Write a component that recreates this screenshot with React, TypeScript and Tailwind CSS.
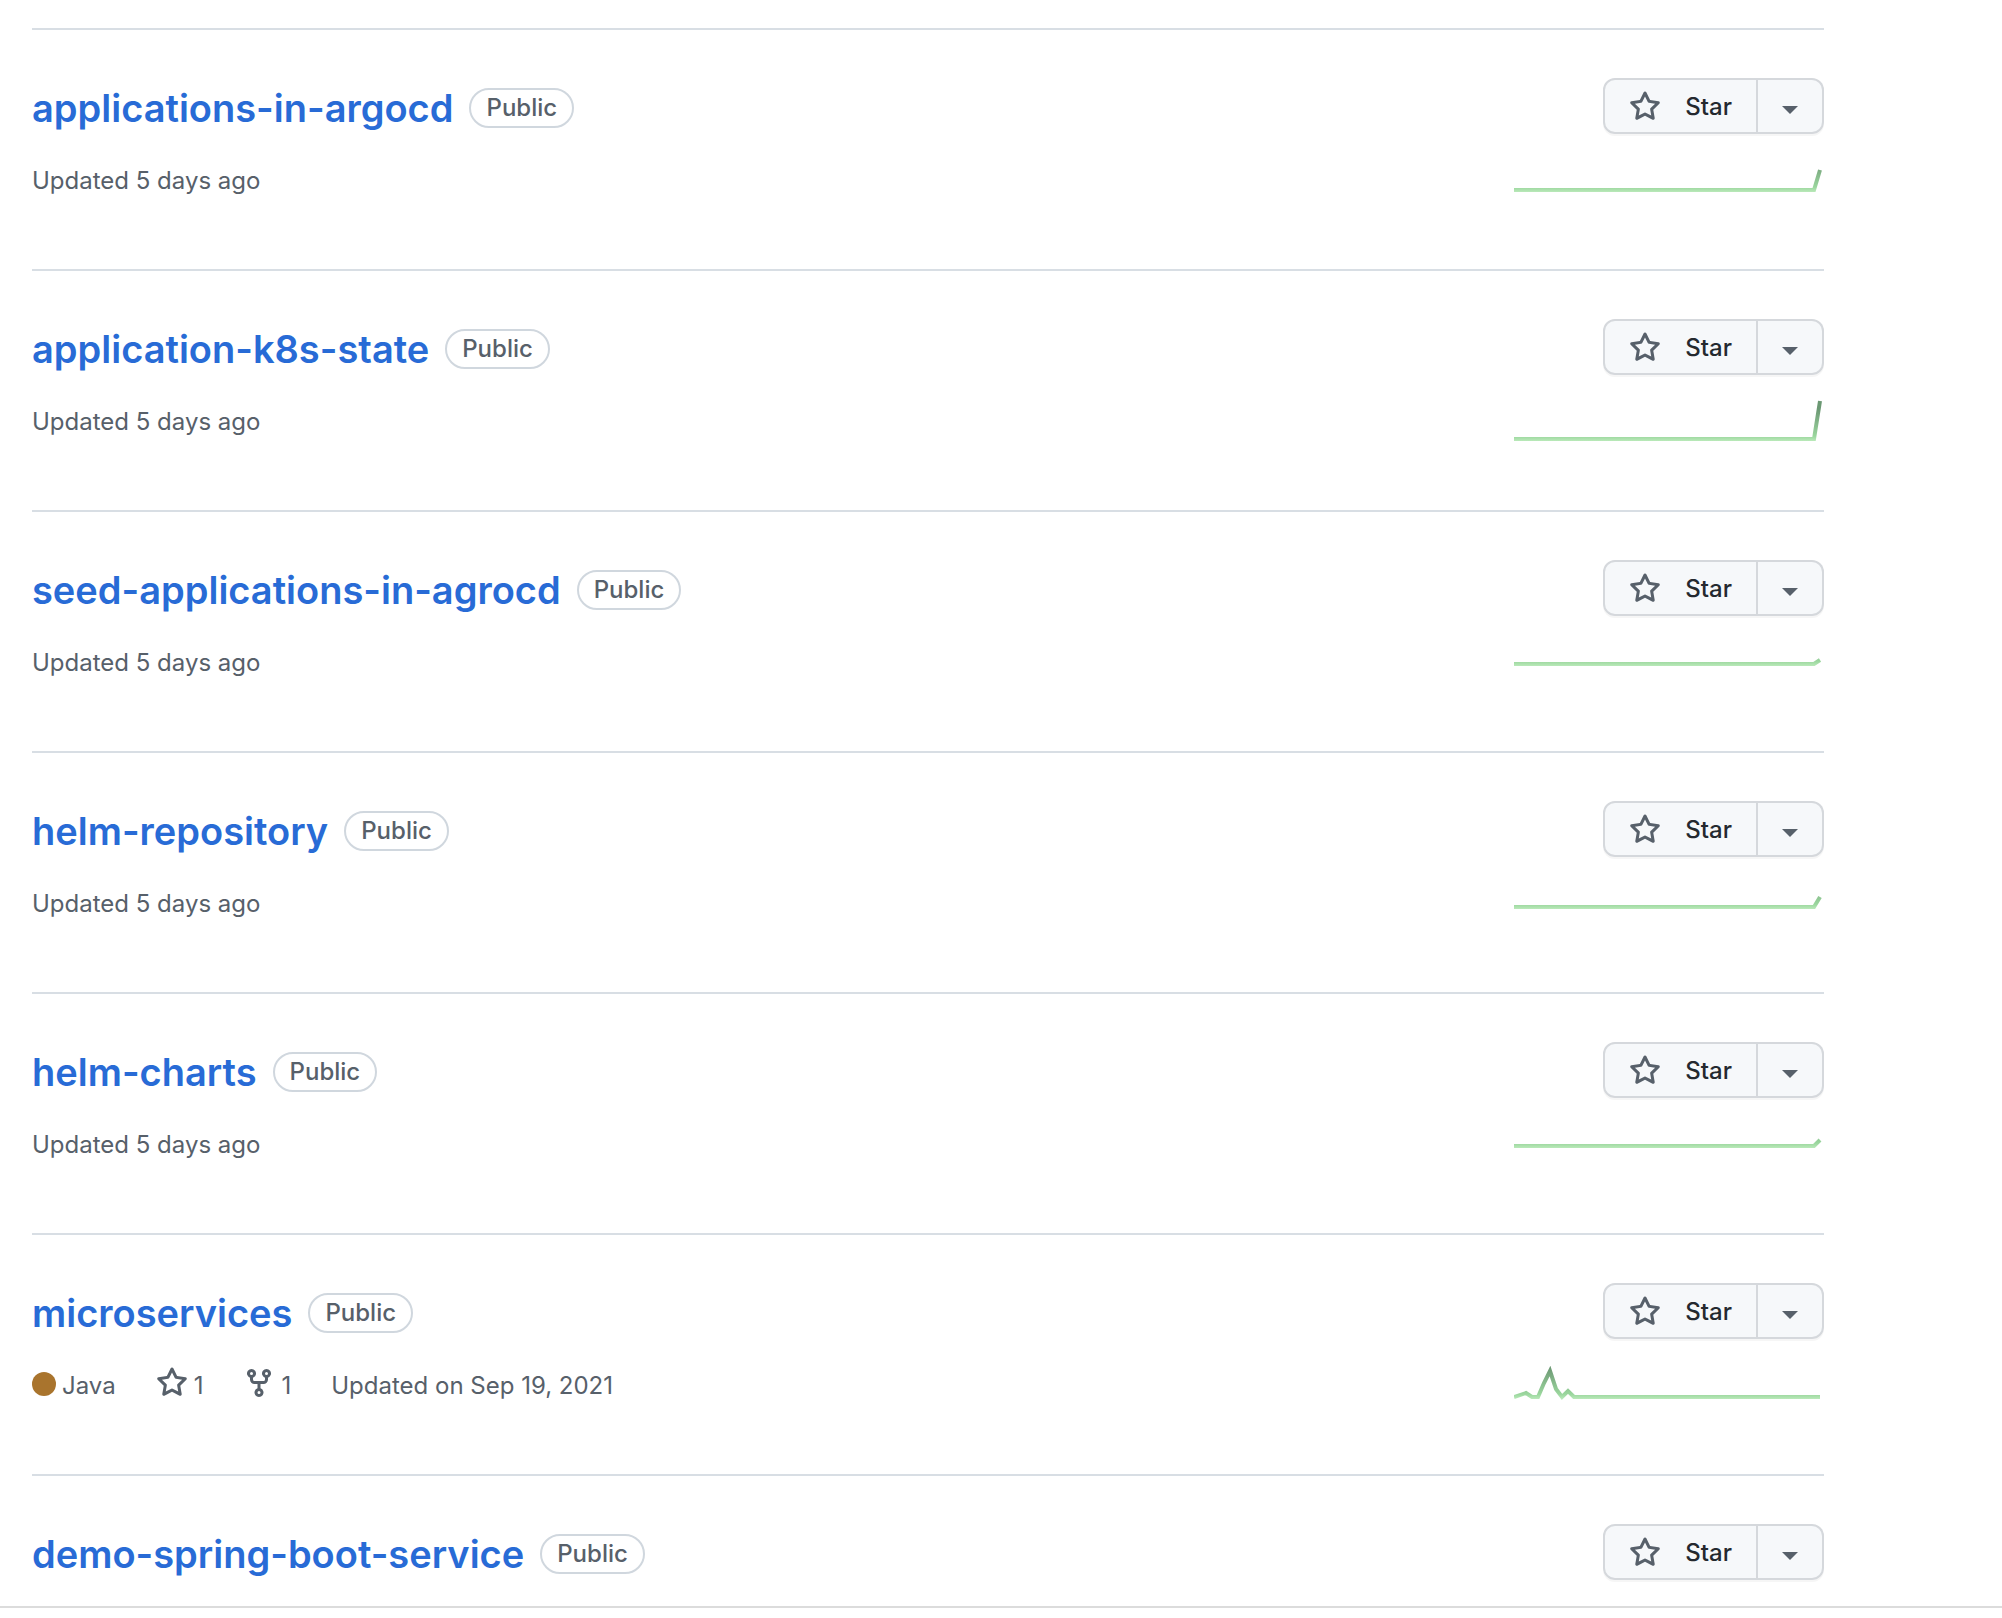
import React from "react";

type Repo = {
  name: string;
  updated: string;
  base: number;
  points: string;
  language?: string;
  stars?: number;
  forks?: number;
};

const repos: Repo[] = [
  { name: "applications-in-argocd", updated: "Updated 5 days ago", base: 34, points: "0,34 300,34 306,14" },
  { name: "application-k8s-state", updated: "Updated 5 days ago", base: 42, points: "0,42 300,42 306,4" },
  { name: "seed-applications-in-agrocd", updated: "Updated 5 days ago", base: 26, points: "0,26 300,26 306,22" },
  { name: "helm-repository", updated: "Updated 5 days ago", base: 28, points: "0,28 300,28 306,18" },
  { name: "helm-charts", updated: "Updated 5 days ago", base: 26, points: "0,26 300,26 306,20" },
  {
    name: "microservices",
    updated: "Updated on Sep 19, 2021",
    base: 36,
    points: "0,36 12,32 18,36 24,36 30,22 36,10 42,28 48,36 54,30 60,36 306,36",
    language: "Java",
    stars: 1,
    forks: 1,
  },
  { name: "demo-spring-boot-service", updated: "", base: 0, points: "" },
];

function StarIcon() {
  return (
    <svg viewBox="0 0 16 16" className="size-8 shrink-0 fill-[#57606a]" aria-hidden="true">
      <path
        fillRule="evenodd"
        d="M8 .25a.75.75 0 01.673.418l1.882 3.815 4.21.612a.75.75 0 01.416 1.279l-3.046 2.97.719 4.192a.75.75 0 01-1.088.791L8 12.347l-3.766 1.98a.75.75 0 01-1.088-.79l.72-4.194L.818 6.374a.75.75 0 01.416-1.28l4.21-.611L7.327.668A.75.75 0 018 .25zm0 2.445L6.615 5.5a.75.75 0 01-.564.41l-3.097.45 2.24 2.184a.75.75 0 01.216.664l-.528 3.084 2.769-1.456a.75.75 0 01.698 0l2.77 1.456-.53-3.084a.75.75 0 01.216-.664l2.24-2.183-3.096-.45a.75.75 0 01-.564-.41L8 2.694v.001z"
      />
    </svg>
  );
}

function ForkIcon() {
  return (
    <svg viewBox="0 0 16 16" className="size-8 shrink-0 fill-[#57606a]" aria-hidden="true">
      <path
        fillRule="evenodd"
        d="M5 3.25a.75.75 0 11-1.5 0 .75.75 0 011.5 0zm0 2.122a2.25 2.25 0 10-1.5 0v.878A2.25 2.25 0 005.75 8.5h1.5v2.128a2.251 2.251 0 101.5 0V8.5h1.5a2.25 2.25 0 002.25-2.25v-.878a2.25 2.25 0 10-1.5 0v.878a.75.75 0 01-.75.75h-4.5A.75.75 0 015 6.25v-.878zm3.75 7.378a.75.75 0 11-1.5 0 .75.75 0 011.5 0zm3-8.75a.75.75 0 100-1.5.75.75 0 000 1.5z"
      />
    </svg>
  );
}

function Sparkline({ id, base, points }: { id: string; base: number; points: string }) {
  return (
    <svg viewBox="0 0 310 60" className="h-[60px] w-[310px]" role="img" aria-label="Past year of activity">
      <defs>
        <linearGradient id={id} gradientUnits="userSpaceOnUse" x1="0" x2="0" y1={base + 3} y2={base - 30}>
          <stop offset="0%" stopColor="#c0edbf" />
          <stop offset="18%" stopColor="#9ad69d" />
          <stop offset="60%" stopColor="#83b588" />
          <stop offset="100%" stopColor="#6b9873" />
        </linearGradient>
      </defs>
      <polyline points={points} fill="none" stroke={`url(#${id})`} strokeWidth="4" />
    </svg>
  );
}

function StarButton({ name }: { name: string }) {
  return (
    <div className="flex h-14 rounded-xl shadow-[0_2px_0_rgba(27,31,36,0.04)]">
      <button
        type="button"
        aria-label={`Star ${name}`}
        className="flex items-center gap-6 rounded-l-xl border-2 border-[#d5d8dc] bg-[#f6f8fa] px-6 pt-0.5 text-2xl font-medium text-[#24292f]"
      >
        <StarIcon />
        Star
      </button>
      <button
        type="button"
        aria-label={`Add ${name} to a list`}
        className="flex w-[66px] items-center justify-center rounded-r-xl border-2 border-l-0 border-[#d5d8dc] bg-[#f6f8fa]"
      >
        <svg viewBox="0 0 16 16" className="size-4 fill-[#57606a]" aria-hidden="true">
          <path d="M0 8h16l-8 8z" />
        </svg>
      </button>
    </div>
  );
}

function RepoRow({ repo }: { repo: Repo }) {
  return (
    <li className="flex justify-between border-t-2 border-[#d8dee4] pt-12 pb-[53px] last:pb-[22px]">
      <div>
        <div className="flex items-center gap-4">
          <h3 className="text-[38px] leading-[60px] font-semibold">
            <a href={`#${repo.name}`} className="text-[#286bd6]">
              {repo.name}
            </a>
          </h3>
          <span className="flex h-10 items-center rounded-full border-2 border-[#d0d7de] px-[15px] text-2xl font-medium text-[#57606a]">
            Public
          </span>
        </div>
        {repo.updated && (
          <div className="mt-6 flex items-start text-2xl leading-[38px] text-[#57606a]">
            {repo.language && (
              <span className="mr-10 flex items-center gap-1.5">
                <span className="mb-1 size-6 rounded-full bg-[#a9742d]" />
                {repo.language}
              </span>
            )}
            {repo.stars && (
              <a href="#stargazers" className="mr-10 flex items-start gap-1.5">
                <StarIcon />
                {repo.stars}
              </a>
            )}
            {repo.forks && (
              <a href="#forks" className="mr-10 flex items-start gap-1.5">
                <ForkIcon />
                {repo.forks}
              </a>
            )}
            <span>{repo.updated}</span>
          </div>
        )}
      </div>
      <div className="flex flex-col items-end gap-[22px]">
        <StarButton name={repo.name} />
        {repo.points && <Sparkline id={`activity-${repo.name}`} base={repo.base} points={repo.points} />}
      </div>
    </li>
  );
}

export default function App() {
  return (
    <main className="bg-white font-['Inter',sans-serif]">
      <div className="border-b-2 border-[#dcdcdc] pt-7 pr-[178px] pl-8">
        <ul>
          {repos.map((repo) => (
            <RepoRow key={repo.name} repo={repo} />
          ))}
        </ul>
      </div>
    </main>
  );
}
